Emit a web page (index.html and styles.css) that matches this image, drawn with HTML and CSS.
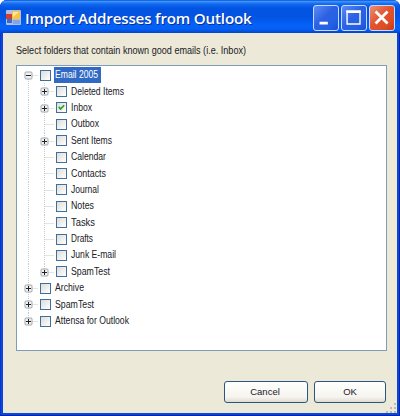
FILE: index.html
```
<!DOCTYPE html>
<html lang="en">
<head>
<meta charset="utf-8">
<title>Import Addresses from Outlook</title>
<link rel="stylesheet" href="styles.css">
</head>
<body>
<div class="window">
  <header class="titlebar">
    <svg class="app-icon" width="15" height="15" viewBox="0 0 15 15">
      <rect width="15" height="15" rx="1" fill="#aebfe2"/>
      <rect x="0" y="4" width="6" height="5" fill="#d63d2c"/>
      <rect x="6" y="1" width="8" height="8" fill="#f7c440"/>
      <path d="M7 2h6L7 7z" fill="#ffe7a0"/>
      <rect x="1" y="9" width="5" height="4" fill="#3d6cd0"/>
      <rect x="7" y="10" width="7" height="4" fill="#87a5e2"/>
    </svg>
    <h1 class="title">Import Addresses from Outlook</h1>
    <div class="controls">
      <span class="control"><svg viewBox="0 0 26 26"><path d="M6 18.5h9" stroke="#fff" stroke-width="3"/></svg></span>
      <span class="control"><svg viewBox="0 0 26 26"><path d="M5.5 5v14.5h14V5" fill="none" stroke="#fff" stroke-width="1.5"/><path d="M4.8 6.2h15.4" stroke="#fff" stroke-width="3"/></svg></span>
      <span class="control close"><svg viewBox="0 0 26 26"><path d="M6 6l13 13M19 6L6 19" stroke="#fff" stroke-width="3"/></svg></span>
    </div>
  </header>
  <main class="content">
    <p class="prompt"><svg class="text" width="230" height="13"><text y="10" textLength="230" lengthAdjust="spacingAndGlyphs">Select folders that contain known good emails (i.e. Inbox)</text></svg></p>
    <ul class="tree" id="tree"></ul>
    <div class="actions">
      <button class="button cancel">Cancel</button>
      <button class="button ok">OK</button>
    </div>
  </main>
  <svg class="grip" width="11" height="11" viewBox="0 0 11 11"><path d="M8 1h2v2H8zM8 5h2v2H8zM4 5h2v2H4zM8 9h2v2H8zM4 9h2v2H4zM0 9h2v2H0z" fill="#bfbba9"/></svg>
</div>
<script src="tree.js"></script>
</body>
</html>
```
FILE: tree.js
```
// label, depth, toggle sign, label width
const folders = [
  ["Email 2005", 0, "-", 43], ["Deleted Items", 1, "+", 53], ["Inbox", 1, "+", 21],
  ["Outbox", 1, "", 28], ["Sent Items", 1, "+", 41], ["Calendar", 1, "", 35],
  ["Contacts", 1, "", 35], ["Journal", 1, "", 28], ["Notes", 1, "", 23],
  ["Tasks", 1, "", 24], ["Drafts", 1, "", 22], ["Junk E-mail", 1, "", 45],
  ["SpamTest", 1, "+", 39], ["Archive", 0, "+", 29], ["SpamTest", 0, "+", 39],
  ["Attensa for Outlook", 0, "+", 74]
];
const lines = (depth, index) => {
  const x = depth ? 20.5 : 4.5;
  const root = `<path d="M4.5 ${index ? 0 : 8}V${index === 15 ? 8 : 17}"/>`;
  const child = depth ? `<path d="M20.5 0V${index === 12 ? 8 : 17}"/>` : "";
  return `<g class="guide">${root}${child}<path d="M${x} 8.5h9"/></g>`;
};
const toggle = (depth, sign) => {
  if (!sign) return "";
  const x = depth ? 17 : 1;
  return `<rect class="toggle" x="${x}" y="5" width="7" height="7" rx="1"/>
    <path class="sign" d="M${x + 1} 8.5h5${sign === "+" ? `M${x + 3.5} 6v5` : ""}"/>`;
};
document.getElementById("tree").innerHTML = folders.map(([name, depth, sign, width], i) => `
  <li class="row">
    <svg class="branch ${depth ? "nested" : ""}" height="16.43">${lines(depth, i)}${toggle(depth, sign)}</svg>
    <span class="check"><svg viewBox="0 0 10 10">${name === "Inbox" ? '<path class="tick" d="M2 4.3l2 2.4L8 2.5"/>' : ""}</svg></span>
    <span class="label ${i ? "" : "selected"}"><svg class="text" width="${width}" height="14"><text y="10" textLength="${width}" lengthAdjust="spacingAndGlyphs">${name}</text></svg></span>
  </li>`).join("");
```
FILE: styles.css
```
* { box-sizing: border-box; }
body {
  margin: 0;
  font-family: "Liberation Sans", Arial, sans-serif;
  font-size: 10px;
  color: #20201e;
  background: #fff;
}
.window {
  position: relative;
  width: 400px;
  height: 416px;
  overflow: hidden;
  display: flex;
  flex-direction: column;
  padding: 0 3px 3px;
  border-radius: 7px 7px 0 0;
  background: #0846dc;
  box-shadow: inset -1px -1px #0024a4, inset 1px 0 #0a36d0;
}
.titlebar {
  flex: none;
  height: 33px;
  margin: 0 -3px;
  padding: 2px 5px 0 6px;
  display: flex;
  align-items: center;
  border-radius: 7px 7px 0 0;
  background: linear-gradient(#0a50d4 0, #3c92fb 1.5px, #1068f0 4px, #0354e2 8px, #0253e1 16px, #0561f8 25px, #0560f5 29px, #0144ce 33px);
}
.app-icon { flex: none; margin-right: 4px; }
.title {
  margin: 0;
  font: 600 15.2px/20px "Open Sans", "Trebuchet MS", sans-serif;
  letter-spacing: -0.2px;
  color: #fff;
  white-space: nowrap;
  text-shadow: 1px 1px #0a3094;
}
.controls { margin-left: auto; display: flex; gap: 2px; }
.control {
  width: 26px;
  height: 26px;
  border: 1px solid #c8daff;
  border-radius: 3px;
  background: linear-gradient(135deg, #5c8ef4, #2c62e2 45%, #2460e6 75%, #1e50cc);
}
.control svg { display: block; width: 24px; height: 24px; }
.close { background: linear-gradient(135deg, #ee9073, #e05430 45%, #dd4c25 75%, #c23c14); }
.content {
  flex: 1;
  display: flex;
  flex-direction: column;
  padding: 11px 10px 10px 13px;
  background: #ece9d8;
}
.prompt { margin: 0; height: 21px; }
.tree {
  list-style: none;
  margin: 0;
  width: 371px;
  height: 286px;
  padding: 1px 0 0 7px;
  border: 1px solid #7f9db9;
  background: #fff;
}
.row { display: flex; align-items: center; height: 16.4px; }
.branch { flex: none; width: 16px; overflow: visible; }
.branch.nested { width: 32px; }
.guide path { stroke: #c9c9c9; stroke-dasharray: 1 1; fill: none; }
.toggle { fill: #f3f1ea; stroke: #9aa9bb; }
.sign { stroke: #222; fill: none; }
.check {
  flex: none;
  width: 11px;
  height: 11px;
  border: 1px solid #3f6f9f;
  background: linear-gradient(135deg, #dcdcd7, #fff);
}
.check svg { display: block; width: 9px; height: 9px; }
.tick { fill: none; stroke: #21a121; stroke-width: 1.8; }
.label { display: flex; margin-left: 3px; padding: 1px 3px 1px 1px; }
.selected { background: #316ac5; color: #fff; }
.text { display: block; overflow: visible; fill: currentColor; }
.actions { display: flex; justify-content: flex-end; gap: 6px; margin-top: 30px; padding-right: 1px; }
.button {
  height: 22px;
  padding: 0 0 1px;
  font: inherit;
  font-size: 9.5px;
  color: inherit;
  border: 1px solid #2b5684;
  border-radius: 3px;
  background: linear-gradient(#fff, #f5f4ee 75%, #dfdbcf);
}
.cancel { width: 84px; padding-right: 2px; }
.ok { width: 72px; }
.grip { position: absolute; right: 3px; bottom: 3px; }
```
